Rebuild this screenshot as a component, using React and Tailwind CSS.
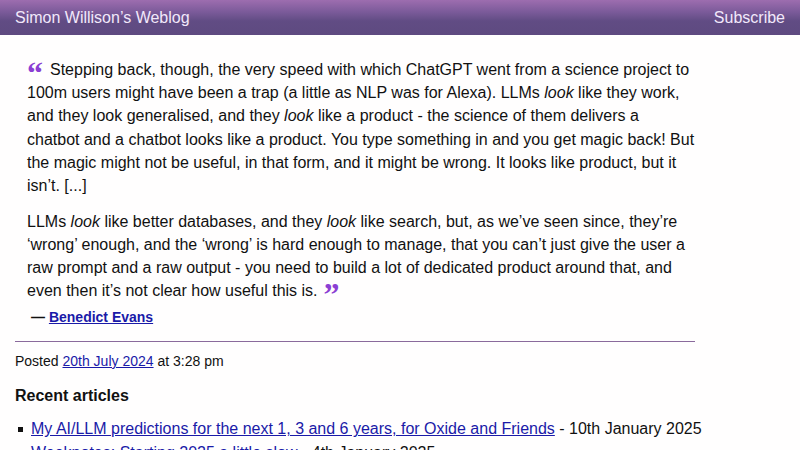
export default function App() {
  const sans = { fontFamily: '"Liberation Sans", Arial, sans-serif' };
  const serif = { fontFamily: '"Liberation Serif", serif' };
  return (
    <div className="min-h-[450px] bg-[#fffefe] text-[#111]" style={sans}>
      <header className="h-[35px] flex items-center justify-between px-[15px] bg-[linear-gradient(to_bottom,#9d6daf_0%,#7a5a99_35%,#614c84_60%,#5e4a80_100%)] text-[#f2e8fb] text-[16px]">
        <span>Simon Willison’s Weblog</span>
        <span>Subscribe</span>
      </header>
      <main className="px-[15px] w-[710px]">
        <blockquote className="ml-[12px] mt-[23px] text-[16px] leading-[1.45]">
          <p>
            <span className="text-[#8b3fd3] font-bold text-[32px] leading-[0] align-[-9px] mr-[7px]" style={serif}>“</span>
            Stepping back, though, the very speed with which ChatGPT went from a science project to 100m users might have been a trap (a little as NLP was for Alexa). LLMs <em>look</em> like they work, and they look generalised, and they <em>look</em> like a product - the science of them delivers a chatbot and a chatbot looks like a product. You type something in and you get magic back! But the magic might not be useful, in that form, and it might be wrong. It looks like product, but it isn’t. [...]
          </p>
          <p className="mt-[12.8px]">
            LLMs <em>look</em> like better databases, and they <em>look</em> like search, but, as we’ve seen since, they’re ‘wrong’ enough, and the ‘wrong’ is hard enough to manage, that you can’t just give the user a raw prompt and a raw output - you need to build a lot of dedicated product around that, and even then it’s not clear how useful this is.
            <span className="text-[#8b3fd3] font-bold text-[32px] leading-[0] align-[-9px] ml-[6px]" style={serif}>”</span>
          </p>
        </blockquote>
        <p className="ml-[16px] mt-[4px] text-[14px] font-bold leading-[1.45]">
          — <a className="text-[#1a1aa8] underline">Benedict Evans</a>
        </p>
        <div className="mt-[14px] h-px bg-[#8a6a9c]" />
        <p className="mt-[9px] text-[14px] leading-[1.45]">
          Posted <a className="text-[#1a1aa8] underline">20th July 2024</a> at 3:28 pm
        </p>
        <h2 className="mt-[13px] text-[16px] font-bold leading-[1.45]">Recent articles</h2>
        <ul className="mt-[10px] text-[16px] leading-[1.45] w-[780px]">
          <li className="flex items-baseline">
            <span className="w-[5px] h-[5px] bg-[#111] ml-[3px] mr-[8px] self-center shrink-0" />
            <span>
              <a className="text-[#1a1aa8] underline">My AI/LLM predictions for the next 1, 3 and 6 years, for Oxide and Friends</a> - 10th January 2025
            </span>
          </li>
          <li className="flex items-baseline">
            <span className="w-[5px] h-[5px] bg-[#111] ml-[3px] mr-[8px] self-center shrink-0" />
            <span>
              <a className="text-[#1a1aa8] underline">Weeknotes: Starting 2025 a little slow</a> - 4th January 2025
            </span>
          </li>
        </ul>
      </main>
    </div>
  );
}
